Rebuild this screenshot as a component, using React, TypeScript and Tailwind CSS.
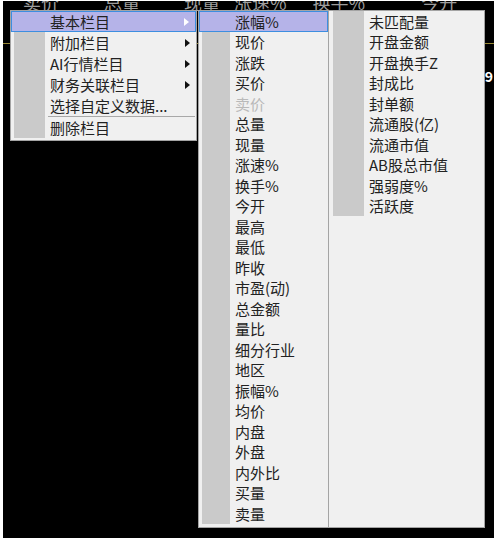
import React from "react";

const FONT = { fontFamily: '"Noto Sans CJK SC", "Noto Sans", sans-serif' };

const MAIN_ITEMS = [
  { label: "基本栏目", sub: true, active: true },
  { label: "附加栏目", sub: true },
  { label: "AI行情栏目", sub: true },
  { label: "财务关联栏目", sub: true },
  { label: "选择自定义数据..." },
];

const BASIC_COLS = [
  "涨幅%", "现价", "涨跌", "买价", "卖价", "总量", "现量", "涨速%", "换手%",
  "今开", "最高", "最低", "昨收", "市盈(动)", "总金额", "量比", "细分行业",
  "地区", "振幅%", "均价", "内盘", "外盘", "内外比", "买量", "卖量",
];

const EXTRA_COLS = [
  "未匹配量", "开盘金额", "开盘换手Z", "封成比", "封单额", "流通股(亿)",
  "流通市值", "AB股总市值", "强弱度%", "活跃度",
];

const HEADERS = [
  { label: "卖价", ml: "ml-[20px]" },
  { label: "总量", ml: "ml-[45px]" },
  { label: "现量", ml: "ml-[44px]" },
  { label: "涨速%", ml: "ml-[14px]" },
  { label: "换手%", ml: "ml-[26px]" },
  { label: "今开", ml: "ml-[56px]" },
];

function Arrow({ light }: { light?: boolean }) {
  return (
    <svg width="5" height="8" viewBox="0 0 5 8" className="mr-[6px] shrink-0">
      <path d="M0 0 L5 4 L0 8 Z" fill={light ? "#ffffff" : "#111111"} />
    </svg>
  );
}

/** Shared menu row: gray icon strip, label, optional submenu arrow. */
function Row({
  label,
  active,
  disabled,
  sub,
  strip,
  h,
}: {
  label: string;
  active?: boolean;
  disabled?: boolean;
  sub?: boolean;
  strip: string;
  h: string;
}) {
  return (
    <div
      className={`flex items-center ${h} ${
        active ? "border border-[#3d8ee0] bg-[#b5b3e8]" : ""
      }`}
    >
      <div
        className={`self-stretch ${strip} ${
          active ? "ml-[2px] bg-transparent" : "ml-[3px] bg-[#cacaca]"
        }`}
      />
      <span
        className={`flex-1 whitespace-nowrap text-[15px] leading-none ${
          active ? "ml-[5px]" : "ml-[5px]"
        } ${disabled ? "text-[#b9b9b9]" : "text-[#222222]"}`}
      >
        {label}
      </span>
      {sub ? <Arrow light={active} /> : null}
    </div>
  );
}

export default function App() {
  return (
    <div className="relative h-[547px] w-[496px] overflow-hidden bg-white" style={FONT}>
      {/* black quote board behind the menus */}
      <div className="ml-[3px] mr-[2px] mt-px h-[537px] overflow-hidden bg-black">
        <div className="-mt-[8px] flex h-[18px] text-[18px] leading-[18px] text-[#9d9d9d]">
          {HEADERS.map((h) => (
            <span key={h.label} className={`${h.ml} whitespace-nowrap`}>
              {h.label}
            </span>
          ))}
        </div>
        <div className="mt-[32px] h-px bg-[#9a8a36]" />
        <div className="mt-[25px] flex justify-end pr-px text-[14px] font-bold leading-none text-white">
          9
        </div>
      </div>

      {/* main context menu */}
      <div className="absolute left-[10px] top-[10px] w-[187px] border border-[#a4a4a4] bg-[#f0f0f0] pb-[2px]">
        {MAIN_ITEMS.map((it) => (
          <Row key={it.label} {...it} strip="w-[31px]" h="h-[21px]" />
        ))}
        <div className="flex h-px">
          <div className="ml-[3px] w-[31px] bg-[#cacaca]" />
          <div className="ml-[3px] mr-px flex-1 bg-[#a8a8a8]" />
        </div>
        <Row label="删除栏目" strip="w-[31px]" h="h-[21px]" />
      </div>

      {/* submenu: 基本栏目 */}
      <div className="absolute left-[198px] top-[10px] w-[131px] border border-[#a4a4a4] bg-[#f0f0f0] pb-[3px]">
        {BASIC_COLS.map((c, i) => (
          <Row
            key={c}
            label={c}
            active={i === 0}
            disabled={c === "卖价"}
            strip="w-[28px]"
            h="h-[20.5px]"
          />
        ))}
      </div>

      {/* third column of 基本栏目 */}
      <div className="absolute left-[329px] top-[10px] h-[518px] w-[156px] border border-l-0 border-[#a4a4a4] bg-[#f0f0f0] pl-px">
        {EXTRA_COLS.map((c) => (
          <Row key={c} label={c} strip="w-[31px]" h="h-[20.5px]" />
        ))}
      </div>
    </div>
  );
}
